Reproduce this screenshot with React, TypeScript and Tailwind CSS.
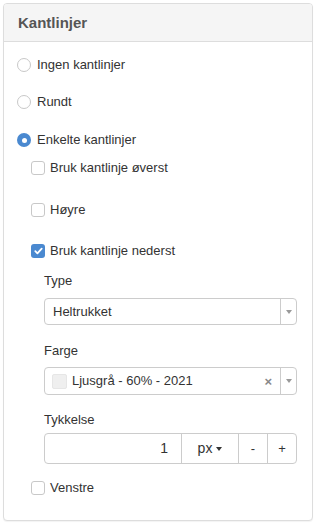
import { useState } from "react";

const Caret = ({ className }: { className?: string }) => (
  <svg width="6" height="4" viewBox="0 0 6 4" className={className ?? "fill-[#999]"}>
    <path d="M0 0h6L3 4z" />
  </svg>
);

const Radio = ({ checked, label, onClick }: { checked: boolean; label: string; onClick: () => void }) => (
  <div className="flex h-[20px] cursor-pointer items-center gap-[6px]" onClick={onClick}>
    {checked ? (
      <span className="flex h-[14px] w-[14px] items-center justify-center rounded-full bg-[#4a89d0]">
        <span className="h-[5px] w-[5px] rounded-full bg-white" />
      </span>
    ) : (
      <span className="h-[14px] w-[14px] rounded-full border border-[#c8c8c8] bg-white" />
    )}
    <span>{label}</span>
  </div>
);

const Check = ({ checked, label, className, onClick }: { checked: boolean; label: string; className?: string; onClick: () => void }) => (
  <div className={"flex h-[20px] cursor-pointer items-center gap-[5px] pl-[14px] " + (className ?? "")} onClick={onClick}>
    {checked ? (
      <span className="flex h-[14px] w-[14px] items-center justify-center rounded-[3px] bg-[#4a89d0]">
        <svg width="9" height="8" viewBox="0 0 9 8" fill="none" stroke="white" strokeWidth="1.8" strokeLinecap="round" strokeLinejoin="round">
          <path d="M1.3 4.2 3.4 6.3 7.7 1.6" />
        </svg>
      </span>
    ) : (
      <span className="h-[14px] w-[14px] rounded-[3px] border border-[#c8c8c8] bg-white" />
    )}
    <span>{label}</span>
  </div>
);

export default function App() {
  const [mode, setMode] = useState("single");
  const [sides, setSides] = useState({ top: false, right: false, bottom: true, left: false });
  const toggle = (k: keyof typeof sides) => setSides({ ...sides, [k]: !sides[k] });

  return (
    <div className="p-[3px] font-['Liberation_Sans',Arial,sans-serif] text-[13px] text-[#333]">
      <div className="h-[518px] w-[310px] overflow-hidden rounded-[4px] border border-[#ddd] bg-white shadow-[0_1px_1px_rgba(0,0,0,0.05)]">
        <div className="flex h-[38px] items-center border-b border-[#ddd] bg-[#f5f5f5] pl-[14px] pt-[1px]">
          <h1 className="text-[15px] font-bold text-[#555]">Kantlinjer</h1>
        </div>
        <div className="flex flex-col pl-[13px] pt-[13px]">
          <Radio checked={mode === "none"} label="Ingen kantlinjer" onClick={() => setMode("none")} />
          <div className="mt-[17px]">
            <Radio checked={mode === "round"} label="Rundt" onClick={() => setMode("round")} />
          </div>
          <div className="mt-[18px]">
            <Radio checked={mode === "single"} label="Enkelte kantlinjer" onClick={() => setMode("single")} />
          </div>
          <Check className="mt-[8px]" checked={sides.top} label="Bruk kantlinje øverst" onClick={() => toggle("top")} />
          <Check className="mt-[22px]" checked={sides.right} label="Høyre" onClick={() => toggle("right")} />
          <Check className="mt-[21px]" checked={sides.bottom} label="Bruk kantlinje nederst" onClick={() => toggle("bottom")} />

          <div className="ml-[27px] mr-[15px] flex flex-col">
            <div className="mt-[10px] flex h-[20px] items-center">Type</div>
            <div className="mt-[7px] flex h-[27px] items-stretch rounded-[4px] border border-[#ccc]">
              <span className="flex flex-1 items-center pl-[8px]">Heltrukket</span>
              <span className="flex w-[16px] items-center justify-center border-l border-[#ccc]">
                <Caret />
              </span>
            </div>

            <div className="mt-[16px] flex h-[20px] items-center">Farge</div>
            <div className="mt-[6px] flex h-[28px] items-stretch rounded-[4px] border border-[#ccc]">
              <span className="flex flex-1 items-center gap-[5px] pl-[7px]">
                <span className="h-[15px] w-[15px] rounded-[2px] border border-[#e6e6e6] bg-[#efefef]" />
                <span>Ljusgrå - 60% - 2021</span>
              </span>
              <span className="flex items-center pr-[8px] text-[13px] font-bold leading-none text-[#888]">×</span>
              <span className="flex w-[16px] items-center justify-center border-l border-[#ccc]">
                <Caret />
              </span>
            </div>

            <div className="mt-[15px] flex h-[20px] items-center">Tykkelse</div>
            <div className="mt-[3px] flex h-[31px] items-stretch rounded-[4px] border border-[#ccc]">
              <span className="flex w-[136px] items-center justify-end pr-[13px] text-[14px]">1</span>
              <span className="flex w-[57px] items-center justify-center gap-[4px] border-l border-[#ccc] text-[14px]">
                px
                <Caret className="fill-[#333]" />
              </span>
              <span className="flex w-[29px] items-center justify-center border-l border-[#ccc]">-</span>
              <span className="flex flex-1 items-center justify-center border-l border-[#ccc]">+</span>
            </div>
          </div>

          <Check className="mt-[14px]" checked={sides.left} label="Venstre" onClick={() => toggle("left")} />
        </div>
      </div>
    </div>
  );
}
